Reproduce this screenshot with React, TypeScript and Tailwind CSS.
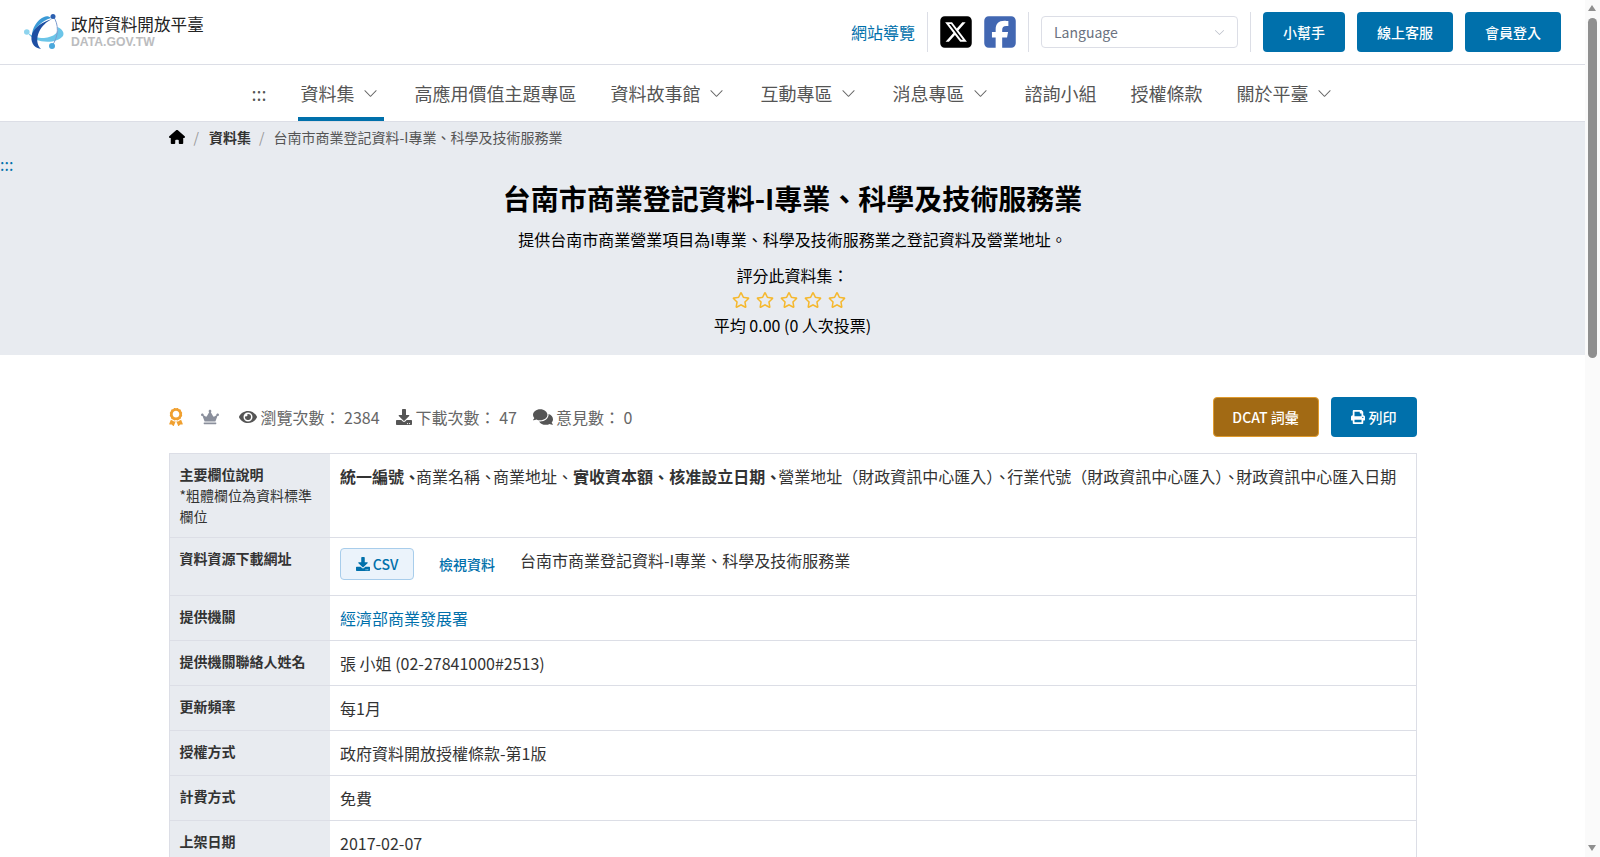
import React from "react"
import { BsChevronDown } from "react-icons/bs"
import { FaAward, FaComments, FaCrown, FaDownload, FaEye, FaPrint, FaRegStar } from "react-icons/fa"
import { FaHouse, FaSquareFacebook, FaSquareXTwitter } from "react-icons/fa6"

const Logo = () => (
    <svg width="42" height="36" viewBox="0 0 42 36" fill="none">
        <path d="M4 19 C9 29 32 31 39 22 C41 18 37 14 33 13 C36 18 30 23 20 24 C13 24 8 22 4 19Z" fill="#6cc5e8" />
        <path d="M29 2 C35 10 35 22 28 32" stroke="#7d9ccf" strokeWidth="1" />
        <path d="M20 3 C13 6 8 14 8 22 C11 14 17 7 27 4 C25 2 22 2 20 3Z" fill="#3b9ad6" />
        <path d="M8 20 C6 27 9 34 17 35 C13 31 12 25 15 18 C18 12 22 8 28 5 C18 8 11 13 8 20Z" fill="#1d4fa3" />
        <circle cx="29" cy="2.5" r="2.5" fill="#2b5fb0" />
        <circle cx="2.8" cy="18" r="2.8" fill="#8ed4ee" />
        <circle cx="28" cy="32" r="3" fill="#4aa8dc" />
    </svg>
)

const navItems = [
    { name: "資料集", arrow: true, active: true },
    { name: "高應用價值主題專區" },
    { name: "資料故事館", arrow: true },
    { name: "互動專區", arrow: true },
    { name: "消息專區", arrow: true },
    { name: "諮詢小組" },
    { name: "授權條款" },
    { name: "關於平臺", arrow: true },
]

const Row = ({ label, children }: { label: React.ReactNode; children: React.ReactNode }) => (
    <tr className="border-b border-[#dcdee6]">
        <th className="w-[161px] bg-[#e8ebf0] px-[10px] py-[10px] text-left align-top text-[14px] leading-[21px] font-bold text-[#333]">{label}</th>
        <td className="px-[10px] py-[10px] align-top text-[16px] leading-[24px] text-[#333]">{children}</td>
    </tr>
)

// the list comma sits tighter here than the font gives it
const Dun = ({ className = "mr-[-3px]" }: { className?: string }) => <span className={className}>、</span>

const App = () => {
    return (
        <div className="min-h-[2140px] bg-white pr-[15px] font-['Noto_Sans_CJK_TC','Noto_Sans',sans-serif] text-[#212529]">
            <header className="flex h-[65px] items-center justify-between border-b border-[#dcdee6] pr-[24px] pl-[24px]">
                <div className="flex items-center gap-[5px]">
                    <Logo />
                    <div className="mb-[3px] flex flex-col">
                        <span className="text-[16.6px] leading-[22px] text-[#222]">政府資料開放平臺</span>
                        <span className="font-['Liberation_Sans',sans-serif] text-[12.2px] leading-[14px] font-bold text-[#bbbcbe]">DATA.GOV.TW</span>
                    </div>
                </div>
                <div className="flex items-center">
                    <a className="text-[16px] text-[#0070ab]">網站導覽</a>
                    <div className="mx-[12px] h-[40px] w-px bg-[#dcdee6]"></div>
                    <FaSquareXTwitter className="h-[36px] w-[32px] text-black" />
                    <FaSquareFacebook className="ml-[12px] h-[36px] w-[32px] text-[#4267b2]" />
                    <div className="mx-[12px] h-[40px] w-px bg-[#dcdee6]"></div>
                    <div className="flex h-[32px] w-[197px] items-center justify-between rounded-[4px] border border-[#dcdee6] pr-[12px] pl-[12px] text-[14px] text-[#6b7280]">
                        Language
                        <BsChevronDown className="text-[11px] text-[#b8bcc6]" />
                    </div>
                    <div className="mx-[12px] h-[40px] w-px bg-[#dcdee6]"></div>
                    <div className="flex gap-[12px] text-[14px] font-medium text-white">
                        <button className="h-[40px] w-[82px] rounded-[4px] bg-[#0070ab]">小幫手</button>
                        <button className="h-[40px] w-[96px] rounded-[4px] bg-[#0070ab]">線上客服</button>
                        <button className="h-[40px] w-[96px] rounded-[4px] bg-[#0070ab]">會員登入</button>
                    </div>
                </div>
            </header>

            <nav className="flex h-[57px] items-center justify-center gap-[28px] border-b border-[#dcdee6] pl-[4px] text-[18px] text-[#555]">
                <span className="mr-[3px]">:::</span>
                {navItems.map((item) => (
                    <div
                        key={item.name}
                        className={`flex h-[56px] items-center gap-[8px] border-b-4 pt-[4px] pr-[3px] pl-[3px] ${item.active ? "border-[#0070ab]" : "border-transparent"}`}
                    >
                        {item.name}
                        {item.arrow && <BsChevronDown className="mr-[3px] text-[15px] text-[#666]" />}
                    </div>
                ))}
            </nav>

            <section className="relative h-[233px] bg-[#e8ebf0]">
                <span className="absolute top-[32px] left-0 text-[16px] leading-[20px] text-[#0070ab]">:::</span>
                <div className="mx-auto w-[1248px]">
                    <div className="flex h-[30px] items-center text-[14px] text-[#555]">
                        <FaHouse className="text-[16px] text-black" />
                        <span className="mr-[10px] ml-[9px] text-[#999]">/</span>
                        <span className="font-bold text-[#333]">資料集</span>
                        <span className="mr-[9px] ml-[8px] text-[#999]">/</span>
                        <span>台南市商業登記資料-I專業、科學及技術服務業</span>
                    </div>
                    <h1 className="mt-[24px] text-center text-[28px] leading-[44px] font-bold text-black">台南市商業登記資料-I專業、科學及技術服務業</h1>
                    <p className="mt-[6px] text-center text-[16px] leading-[26px] text-black">提供台南市商業營業項目為I專業、科學及技術服務業之登記資料及營業地址。</p>
                    <p className="mt-[11px] text-center text-[16px] leading-[24px] text-black">評分此資料集：</p>
                    <div className="flex h-[26px] items-center justify-center gap-[6px] pr-[8px] text-[18px] text-[#f5b82e]">
                        <FaRegStar />
                        <FaRegStar />
                        <FaRegStar />
                        <FaRegStar />
                        <FaRegStar />
                    </div>
                    <p className="text-center text-[16px] leading-[24px] text-black">平均 0.00 (0 人次投票)</p>
                </div>
            </section>

            <main className="mx-auto w-[1248px]">
                <div className="flex items-center justify-between pt-[42px] pb-[16px]">
                    <div className="flex items-center text-[16px] text-[#666]">
                        <FaAward className="ml-[-2px] text-[18px] text-[#f0a030]" />
                        <FaCrown className="ml-[16px] text-[18px] text-[#8a8f9c]" />
                        <FaEye className="ml-[20px] text-[18px] text-[#555]" />
                        <span className="ml-[4px]">瀏覽次數： 2384</span>
                        <FaDownload className="ml-[16px] text-[16px] text-[#555]" />
                        <span className="ml-[4px]">下載次數： 47</span>
                        <FaComments className="ml-[16px] text-[20px] text-[#555]" />
                        <span className="ml-[3px]">意見數： 0</span>
                    </div>
                    <div className="flex gap-[12px] text-[14px] font-medium text-white">
                        <button className="h-[40px] w-[106px] rounded-[4px] border border-[#e09b2d] bg-[#a26a14]">DCAT 詞彙</button>
                        <button className="flex h-[40px] w-[86px] items-center justify-center gap-[4px] rounded-[4px] bg-[#0070ab]">
                            <FaPrint className="text-[14px]" />
                            列印
                        </button>
                    </div>
                </div>
                <table className="w-full table-fixed border-collapse border border-[#dcdee6]">
                    <tbody>
                        <Row
                            label={
                                <>
                                    主要欄位說明
                                    <br />
                                    <span className="font-normal">*粗體欄位為資料標準欄位</span>
                                </>
                            }
                        >
                            <b>統一編號<Dun className="mr-[-4px]" /></b>商業名稱<Dun />商業地址<Dun className="mr-0" /><b>實收資本額<Dun className="mr-0" />核准設立日期<Dun /></b>營業地址（財政資訊中心匯入）<Dun />行業代號（財政資訊中心匯入）<Dun />財政資訊中心匯入日期
                        </Row>
                        <Row label="資料資源下載網址">
                            <div className="mb-[5px] flex items-center">
                                <button className="flex h-[32px] w-[74px] items-center justify-center gap-[3px] rounded-[4px] border border-[#a8cdeb] bg-[#ebf3fb] text-[14px] font-medium text-[#0070ab]">
                                    <FaDownload className="text-[14px]" />
                                    CSV
                                </button>
                                <a className="ml-[25px] text-[14px] font-medium text-[#0070ab]">檢視資料</a>
                                <span className="mt-[-8px] ml-[25px]">台南市商業登記資料-I專業、科學及技術服務業</span>
                            </div>
                        </Row>
                        <Row label="提供機關">
                            <a className="text-[#0070ab]">經濟部商業發展署</a>
                        </Row>
                        <Row label="提供機關聯絡人姓名">張 小姐 (02-27841000#2513)</Row>
                        <Row label="更新頻率">每1月</Row>
                        <Row label="授權方式">政府資料開放授權條款-第1版</Row>
                        <Row label="計費方式">免費</Row>
                        <Row label="上架日期">2017-02-07</Row>
                    </tbody>
                </table>
            </main>

            {/* window scrollbar */}
            <div className="fixed top-0 right-0 bottom-0 w-[15px] bg-[#fafafa]">
                <div className="absolute top-[5px] left-[3px] h-0 w-0 border-r-[4.5px] border-b-[6px] border-l-[4.5px] border-r-transparent border-b-[#8f8f8f] border-l-transparent"></div>
                <div className="absolute top-[18px] left-[3px] h-[340px] w-[9px] rounded-[5px] bg-[#8f8f8f]"></div>
                <div className="absolute bottom-[6px] left-[3px] h-0 w-0 border-t-[6px] border-r-[4.5px] border-l-[4.5px] border-t-[#8f8f8f] border-r-transparent border-l-transparent"></div>
            </div>
        </div>
    )
}

export default App
